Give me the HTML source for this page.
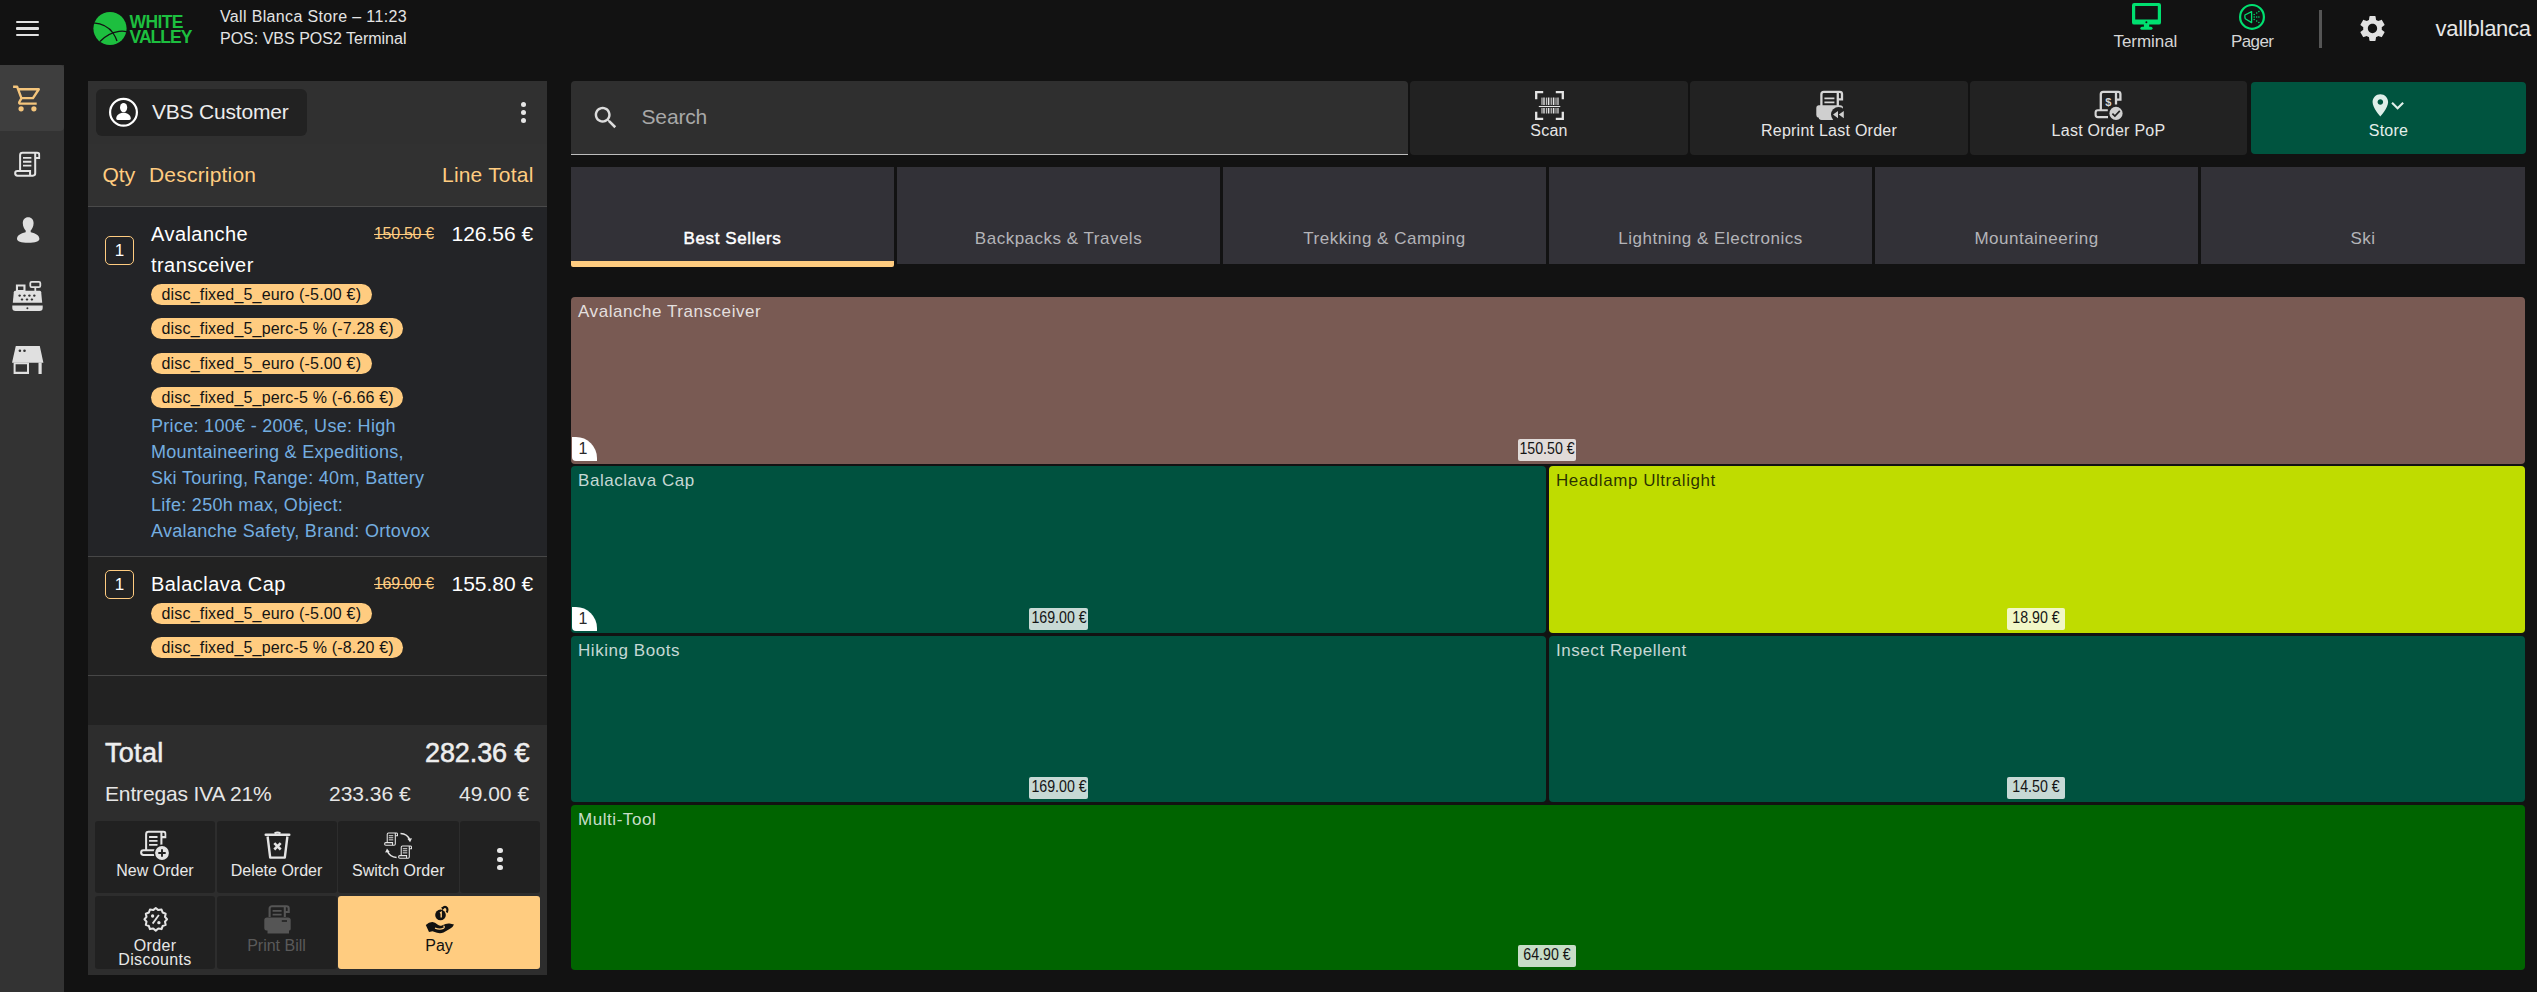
<!DOCTYPE html>
<html><head><meta charset="utf-8"><title>POS</title>
<style>
*{box-sizing:border-box;margin:0;padding:0}
html,body{width:2537px;height:992px;overflow:hidden;background:#121212;font-family:"Liberation Sans",sans-serif;color:#fff}
.a{position:absolute}
.t{position:absolute;white-space:nowrap;line-height:1}
svg{position:absolute;overflow:visible}
.hdr-txt{color:#e4e4e4;font-size:16px}
#side{left:0;top:65px;width:64px;height:927px;background:#333}
#sideact{left:0;top:65px;width:64px;height:66px;background:#3e3e3e;border-radius:0 4px 4px 0}
#op{left:88px;top:81px;width:459px;height:894px;background:#222}
#item1{left:88px;top:207px;width:459px;height:349px;background:#232427}
#ophead{left:88px;top:81px;width:459px;height:125px;background:#313131}
#opcust{left:88px;top:81px;width:459px;height:63px;background:#303030}
#opborder{left:88px;top:206px;width:459px;height:1px;background:#4a4a4a}
#cust{left:96px;top:89px;width:211px;height:47px;background:#222;border-radius:6px}
.orange{color:#ffcc80}
.qty{position:absolute;width:29px;height:29px;border:1px solid #ffcc80;border-radius:5px;color:#fff;font-size:17px;text-align:center;line-height:27px}
.pname{color:#fff;font-size:20px;letter-spacing:0.45px}
.strike{color:#ffcc80;font-size:16px;text-decoration:line-through;letter-spacing:-0.3px}
.lprice{color:#fff;font-size:21px}
.chip{position:absolute;height:21px;border-radius:11px;background:#ffcc80;color:#141414;font-size:16px;line-height:21px;padding-left:10.5px;white-space:nowrap;letter-spacing:0.18px}
.desc{color:#74aee0;font-size:18px;line-height:26.2px;white-space:nowrap;letter-spacing:0.3px}
.sep{position:absolute;left:88px;width:459px;height:1px;background:#474747}
#tot{left:88px;top:725px;width:459px;height:250px;background:#2d2d2d}
.btn{position:absolute;background:#212121;border-radius:3px}
.btxt{position:absolute;left:0;right:0;text-align:center;font-size:16px;color:#e8e8e8;white-space:nowrap;line-height:1}
#search{left:571px;top:81px;width:837px;height:74px;background:#2f2f2f;border-radius:4px 4px 0 0}
#searchline{left:571px;top:154px;width:837px;height:1px;background:#bdbdbd}
.abtn{position:absolute;top:81px;height:74px;background:#222;border-radius:4px}
.abtxt{position:absolute;top:123px;text-align:center;font-size:16px;color:#e6e6e6;line-height:1;letter-spacing:0.25px;white-space:nowrap}
.tab{position:absolute;top:167px;height:97px;background:#323137}
.tabt{position:absolute;top:230px;text-align:center;font-size:17px;color:#b4b4b8;line-height:1;white-space:nowrap;letter-spacing:0.5px}
.tile{position:absolute;border-radius:4px}
.tname{position:absolute;left:7px;top:6px;font-size:17px;line-height:1;white-space:nowrap;letter-spacing:0.55px}
.price{position:absolute;height:22px;background:rgba(255,255,255,0.78);border-radius:2px;color:#141414;font-size:16.5px;line-height:19px;text-align:center;white-space:nowrap}.price span{position:absolute;left:50%;top:0;transform:translateX(-50%) scaleX(0.86);transform-origin:50% 50%}
.badge{position:absolute;left:1px;width:25px;height:24px;background:#fff;border-radius:0 21px 0 4px;color:#2a2a2a;font-size:16px;line-height:24px;padding-left:6.5px}
</style></head><body>
<svg width="0" height="0" style="position:absolute">
  <defs>
    <symbol id="scroll" viewBox="0 0 26 26">
      <path d="M6 19.6 V4.2 A2.4 2.4 0 0 1 8.4 1.8 H22.8 A2.3 2.3 0 0 1 25.1 4.1 V7 H21" fill="none" stroke="currentColor" stroke-width="2"/>
      <path d="M21 2 V22.2 A2.3 2.3 0 0 1 18.7 24.5 H3.5 A2.4 2.4 0 0 1 1.1 22.1 A2.3 2.3 0 0 1 3.4 19.8 H15.9 V24.4" fill="none" stroke="currentColor" stroke-width="2"/>
      <path d="M8.9 6.9 H17.2 M8.9 10.7 H17.2 M8.9 14.6 H17.2" fill="none" stroke="currentColor" stroke-width="1.8"/>
    </symbol>
  </defs>
</svg>

<!-- HEADER -->
<div class="a" style="left:16px;top:20.5px;width:23px;height:2.6px;background:#e2e2e2;border-radius:1px"></div>
<div class="a" style="left:16px;top:27.2px;width:23px;height:2.6px;background:#e2e2e2;border-radius:1px"></div>
<div class="a" style="left:16px;top:33.8px;width:23px;height:2.6px;background:#e2e2e2;border-radius:1px"></div>

<svg style="left:93px;top:11px" width="34" height="35" viewBox="0 0 34 35">
  <circle cx="17" cy="17.5" r="16.6" fill="#1dbf3f"/>
  <path d="M0.5 11.8 C9 12.5 16 16 20 22 C22 25 23 27 24 30" stroke="#121212" stroke-width="1.3" fill="none"/>
  <path d="M7 30.5 C12 25 18 21.5 26 20.3 C29 20 31.5 20 34 20.8" stroke="#121212" stroke-width="1.3" fill="none"/>
</svg>
<div class="t" style="left:129.5px;top:15px;font-size:17.5px;font-weight:700;color:#1dbf3f;letter-spacing:-0.6px;line-height:14.7px">WHITE<br><span style="letter-spacing:-0.95px">VALLEY</span></div>

<div class="t hdr-txt" style="left:220px;top:8.5px;letter-spacing:0.35px">Vall Blanca Store – 11:23</div>
<div class="t hdr-txt" style="left:220px;top:30.5px">POS: VBS POS2 Terminal</div>

<!-- top right -->
<svg style="left:2132px;top:3.2px" width="29" height="27" viewBox="0 0 29 27">
  <path fill="#00e070" fill-rule="evenodd" d="M2.2 0 H26.8 A2.2 2.2 0 0 1 29 2.2 V19.4 A2.2 2.2 0 0 1 26.8 21.6 H2.2 A2.2 2.2 0 0 1 0 19.4 V2.2 A2.2 2.2 0 0 1 2.2 0 Z M3.2 3 V16.6 H25.8 V3 Z"/>
  <circle cx="14.4" cy="19.2" r="1" fill="#121212"/>
  <rect x="11.9" y="21" width="5.3" height="3.5" fill="#00e070"/>
  <rect x="8.4" y="23.7" width="12.1" height="3" rx="1.5" fill="#00e070"/>
</svg>
<div class="t" style="left:2113.5px;top:32.8px;font-size:17px;color:#d6d6d6;letter-spacing:-0.05px">Terminal</div>
<svg style="left:2239.4px;top:3.5px" width="26" height="26" viewBox="0 0 26 26">
  <circle cx="13" cy="12.9" r="11.9" fill="none" stroke="#00e070" stroke-width="2.2"/>
  <path d="M5.9 11 Q5.6 12.9 6.3 14.8 L12.6 18.6 V7.6 Z" fill="none" stroke="#00e070" stroke-width="1.3" stroke-linejoin="round"/>
  <g fill="#00e070"><circle cx="15.2" cy="10.5" r="0.75"/><circle cx="15.2" cy="13" r="0.75"/><circle cx="15.2" cy="15.5" r="0.75"/>
  <circle cx="17.7" cy="9" r="0.75"/><circle cx="17.7" cy="13" r="0.75"/><circle cx="17.7" cy="17" r="0.75"/>
  <circle cx="19.9" cy="7.6" r="0.75"/><circle cx="19.9" cy="13" r="0.75"/><circle cx="19.9" cy="18.4" r="0.75"/></g>
</svg>
<div class="t" style="left:2231px;top:32.8px;font-size:17px;color:#d6d6d6;letter-spacing:-0.6px">Pager</div>
<div class="a" style="left:2319px;top:10px;width:3px;height:38px;background:#555"></div>
<svg style="left:2356.6px;top:13.3px" width="31" height="31" viewBox="0 0 24 24">
  <path fill="#e0e0e0" d="M19.14 12.94c.04-.3.06-.61.06-.94 0-.32-.02-.64-.07-.94l2.03-1.58c.18-.14.23-.41.12-.61l-1.92-3.32c-.12-.22-.37-.29-.59-.22l-2.39.96c-.5-.38-1.03-.7-1.62-.94l-.36-2.54c-.04-.24-.24-.41-.48-.41h-3.84c-.24 0-.43.17-.47.41l-.36 2.54c-.59.24-1.13.57-1.62.94l-2.39-.96c-.22-.08-.47 0-.59.22L2.74 8.87c-.12.21-.08.47.12.61l2.03 1.58c-.05.3-.09.63-.09.94s.02.64.07.94l-2.03 1.58c-.18.14-.23.41-.12.61l1.92 3.32c.12.22.37.29.59.22l2.39-.96c.5.38 1.03.7 1.62.94l.36 2.54c.05.24.24.41.48.41h3.84c.24 0 .44-.17.47-.41l.36-2.54c.59-.24 1.13-.56 1.62-.94l2.39.96c.22.08.47 0 .59-.22l1.92-3.32c.12-.22.07-.47-.12-.61l-2.01-1.58zM12 15.6c-1.98 0-3.6-1.62-3.6-3.6s1.62-3.6 3.6-3.6 3.6 1.62 3.6 3.6-1.62 3.6-3.6 3.6z"/>
</svg>
<div class="t" style="left:2435.5px;top:18px;font-size:22px;color:#e6e6e6;letter-spacing:-0.25px">vallblanca</div>

<!-- SIDEBAR -->
<div class="a" id="side"></div>
<div class="a" id="sideact"></div>
<svg style="left:13px;top:85px" width="27" height="27" viewBox="13 85 27 27">
  <path d="M13.1 86.7 H17.1 L21.4 98.1 H33 L38.8 89.25 H18.9 M21.4 98.4 L19.3 102 Q18.8 103.6 20.5 103.6 H36.7" fill="none" stroke="#f4c57c" stroke-width="2.4" stroke-linejoin="round"/>
  <circle cx="21.1" cy="108.8" r="2.6" fill="#f4c57c"/><circle cx="33.9" cy="108.8" r="2.6" fill="#f4c57c"/>
</svg>
<svg style="left:14.4px;top:150.5px;color:#e4e4e4" width="26.3" height="26.2"><use href="#scroll"/></svg>
<svg style="left:17px;top:216.5px" width="22.4" height="26" viewBox="0 0 22.4 26">
  <path fill="#e0e0e0" d="M11.2 0.2 C14.6 0.2 16.6 2.6 16.6 6.2 C16.6 9.6 14.8 12.6 13.6 13.7 L13.8 15.2 C18.8 16.2 22.4 18.4 22.4 21.8 C22.4 24.6 18.4 25.8 11.2 25.8 C4 25.8 0 24.6 0 21.8 C0 18.4 3.6 16.2 8.6 15.2 L8.8 13.7 C7.6 12.6 5.8 9.6 5.8 6.2 C5.8 2.6 7.8 0.2 11.2 0.2 Z"/>
</svg>
<svg style="left:12px;top:281px" width="31" height="30" viewBox="0 0 31 30">
  <g fill="#e0e0e0">
  <rect x="18.3" y="0.9" width="10" height="5.2" rx="1.4" fill="none" stroke="#e0e0e0" stroke-width="1.8"/>
  <rect x="22.4" y="6" width="1.8" height="4" />
  <path fill-rule="evenodd" d="M3.9 3.6 H13.5 V10.5 H3.9 Z M6 5.4 V9 H11.4 V5.4 Z"/>
  <path d="M3.4 9.8 H27.6 Q29 9.8 29.2 11.2 L30.2 21.8 H0.8 L1.8 11.2 Q2 9.8 3.4 9.8 Z"/>
  <path d="M0.3 24.6 H30.7 V26.8 Q30.7 30 27.5 30 H3.5 Q0.3 30 0.3 26.8 Z"/>
  </g>
  <g fill="#333"><circle cx="7.6" cy="14.6" r="1.2"/><circle cx="12.5" cy="14.6" r="1.2"/><circle cx="17.4" cy="14.6" r="1.2"/><circle cx="22.3" cy="14.6" r="1.2"/>
  <path d="M10 17.3 V19.7 M8.8 18.5 H11.2 M15 17.3 V19.7 M13.8 18.5 H16.2 M19.9 17.3 V19.7 M18.7 18.5 H21.1" stroke="#333" stroke-width="1.1"/>
  <circle cx="15.4" cy="27.3" r="1"/></g>
</svg>
<svg style="left:11.7px;top:346px" width="31.4" height="28" viewBox="0 0 31.4 28">
  <g fill="#e0e0e0">
  <path d="M3.8 0 H27.8 L31.4 16.8 H0 Z"/>
  <path fill-rule="evenodd" d="M1.6 16.5 H17 V28 H1.6 Z M3.6 18.3 V25.8 H15 V18.3 Z"/>
  <rect x="26.5" y="16.5" width="3.2" height="11.5"/>
  </g>
  <circle cx="7.9" cy="4.8" r="1.3" fill="#333"/><circle cx="12.5" cy="4.8" r="1.3" fill="#333"/>
</svg>
<!-- ORDER PANEL -->
<div class="a" id="op"></div>
<div class="a" id="ophead"></div>
<div class="a" id="opcust"></div>
<div class="a" id="opborder"></div>
<div class="a" id="item1"></div>
<div class="a" id="cust"></div>
<svg style="left:108.9px;top:98.3px" width="29" height="29" viewBox="0 0 29 29">
  <circle cx="14.5" cy="14.3" r="13.4" fill="none" stroke="#fff" stroke-width="2.2"/>
  <ellipse cx="14.6" cy="9.6" rx="3.6" ry="4.7" fill="#fff"/>
  <path d="M7.2 20.6 C7.2 17.2 10.4 14.7 14.5 14.7 C18.6 14.7 21.8 17.2 21.8 20.6 C21.8 21.9 20.6 22.1 19.4 22.1 H9.6 C8.4 22.1 7.2 21.9 7.2 20.6 Z" fill="#fff"/>
</svg>
<div class="t" style="left:152px;top:100.5px;font-size:21px;color:#ececec;letter-spacing:-0.2px">VBS Customer</div>
<div class="a" style="left:520.8px;top:101.8px;width:5.2px;height:5.2px;border-radius:50%;background:#e6e6e6"></div>
<div class="a" style="left:520.8px;top:109.8px;width:5.2px;height:5.2px;border-radius:50%;background:#e6e6e6"></div>
<div class="a" style="left:520.8px;top:117.8px;width:5.2px;height:5.2px;border-radius:50%;background:#e6e6e6"></div>
<div class="t orange" style="left:102.5px;top:164px;font-size:21px">Qty</div>
<div class="t orange" style="left:149px;top:164px;font-size:21px;letter-spacing:0.2px">Description</div>
<div class="t orange" style="left:442px;top:164px;font-size:21px;letter-spacing:0.2px">Line Total</div>

<!-- line 1 -->
<div class="qty" style="left:105px;top:236px">1</div>
<div class="t pname" style="left:151px;top:223.5px">Avalanche</div>
<div class="t pname" style="left:151px;top:254.5px">transceiver</div>
<div class="t strike" style="left:374px;top:226px">150.50 €</div>
<div class="t lprice" style="left:451.5px;top:223.3px">126.56 €</div>
<div class="chip" style="left:151px;top:284px;width:221px">disc_fixed_5_euro (-5.00 €)</div>
<div class="chip" style="left:151px;top:318.3px;width:252px">disc_fixed_5_perc-5 % (-7.28 €)</div>
<div class="chip" style="left:151px;top:352.5px;width:221px">disc_fixed_5_euro (-5.00 €)</div>
<div class="chip" style="left:151px;top:387px;width:252px">disc_fixed_5_perc-5 % (-6.66 €)</div>
<div class="a desc" style="left:151px;top:413px">Price: 100€ - 200€, Use: High<br>Mountaineering &amp; Expeditions,<br>Ski Touring, Range: 40m, Battery<br>Life: 250h max, Object:<br>Avalanche Safety, Brand: Ortovox</div>
<div class="sep" style="top:556px"></div>

<!-- line 2 -->
<div class="qty" style="left:105px;top:570px">1</div>
<div class="t pname" style="left:151px;top:574px">Balaclava Cap</div>
<div class="t strike" style="left:374px;top:576px">169.00 €</div>
<div class="t lprice" style="left:451.5px;top:573.3px">155.80 €</div>
<div class="chip" style="left:151px;top:603px;width:221px">disc_fixed_5_euro (-5.00 €)</div>
<div class="chip" style="left:151px;top:637px;width:252px">disc_fixed_5_perc-5 % (-8.20 €)</div>
<div class="sep" style="top:675px"></div>

<!-- totals -->
<div class="a" id="tot"></div>
<div class="t" style="left:105px;top:739.5px;font-size:27px;color:#eee;-webkit-text-stroke:0.55px #eee;letter-spacing:0.3px">Total</div>
<div class="t" style="left:425px;top:739.5px;font-size:27px;color:#eee;-webkit-text-stroke:0.55px #eee;letter-spacing:-0.1px">282.36 €</div>
<div class="t" style="left:105px;top:782.5px;font-size:21px;color:#e6e6e6;letter-spacing:-0.15px">Entregas IVA 21%</div>
<div class="t" style="left:329px;top:782.5px;font-size:21px;color:#e6e6e6">233.36 €</div>
<div class="t" style="left:459px;top:782.5px;font-size:21px;color:#e6e6e6">49.00 €</div>

<div class="btn" style="left:95px;top:821px;width:120px;height:72px"><div class="btxt" style="top:42px">New Order</div></div>
<div class="btn" style="left:216.5px;top:821px;width:120px;height:72px"><div class="btxt" style="top:42px">Delete Order</div></div>
<div class="btn" style="left:338px;top:821px;width:120.5px;height:72px"><div class="btxt" style="top:42px">Switch Order</div></div>
<div class="btn" style="left:460px;top:821px;width:80px;height:72px"></div>
<div class="a" style="left:497.4px;top:848.3px;width:5.2px;height:5.2px;border-radius:50%;background:#e6e6e6"></div>
<div class="a" style="left:497.4px;top:856.8px;width:5.2px;height:5.2px;border-radius:50%;background:#e6e6e6"></div>
<div class="a" style="left:497.4px;top:865.3px;width:5.2px;height:5.2px;border-radius:50%;background:#e6e6e6"></div>
<div class="btn" style="left:95px;top:895.5px;width:120px;height:73px"><div class="btxt" style="top:43px;line-height:14px;letter-spacing:0.35px">Order<br>Discounts</div></div>
<div class="btn" style="left:216.5px;top:895.5px;width:120px;height:73px"><div class="btxt" style="top:42px;color:#5a5a5a">Print Bill</div></div>
<div class="btn" style="left:338px;top:895.5px;width:202px;height:73px;background:#ffcc80"><div class="btxt" style="top:42px;color:#111">Pay</div></div>

<!-- action icons -->
<svg style="left:140.3px;top:830.1px;color:#e4e4e4" width="26.5" height="26.5"><use href="#scroll"/></svg>
<svg style="left:155.1px;top:846.1px" width="14" height="14" viewBox="0 0 14 14">
  <circle cx="7" cy="7" r="8.4" fill="#212121"/>
  <circle cx="7" cy="7" r="6.9" fill="#e4e4e4"/>
  <path d="M7 3.3 V10.7 M3.3 7 H10.7" stroke="#212121" stroke-width="1.9"/>
</svg>
<svg style="left:264.9px;top:831.9px" width="25" height="27" viewBox="0 0 25 27">
  <path d="M0.8 2.8 H24.2" stroke="#e4e4e4" stroke-width="2.6" stroke-linecap="round"/>
  <path d="M9.5 1.5 Q12.5 -0.6 15.5 1.5" stroke="#e4e4e4" stroke-width="2" fill="none"/>
  <path d="M2.6 4.5 L5.2 25.6 H19.8 L22.4 4.5" stroke="#e4e4e4" stroke-width="2.4" fill="none" stroke-linejoin="round"/>
  <path d="M9.3 11.1 L15.7 17.5 M15.7 11.1 L9.3 17.5" stroke="#e4e4e4" stroke-width="2.6"/>
</svg>
<svg style="left:383.7px;top:832.4px;color:#e4e4e4" width="14" height="14"><use href="#scroll"/></svg>
<svg style="left:398px;top:845px;color:#e4e4e4" width="14" height="14"><use href="#scroll"/></svg>
<svg style="left:383.7px;top:832.4px" width="29" height="27" viewBox="0 0 29 27">
  <path d="M16.5 1.4 Q23.5 1.6 25.8 8" stroke="#e4e4e4" stroke-width="1.5" fill="none"/>
  <path d="M23.4 6.8 L26.1 10.3 L28 6.3 Z" fill="#e4e4e4"/>
  <path d="M12.6 25.4 Q5.6 25.2 3.3 18.8" stroke="#e4e4e4" stroke-width="1.5" fill="none"/>
  <path d="M5.7 20 L3 16.5 L1.1 20.5 Z" fill="#e4e4e4"/>
</svg>
<svg style="left:142.7px;top:906px" width="25.5" height="26.6" viewBox="0 0 26 26">
  <path d="M13 1.5 L15.6 3.6 L18.9 3 L20 6.1 L23.1 7.3 L22.4 10.6 L24.5 13 L22.4 15.4 L23.1 18.7 L20 19.9 L18.9 23 L15.6 22.4 L13 24.5 L10.4 22.4 L7.1 23 L6 19.9 L2.9 18.7 L3.6 15.4 L1.5 13 L3.6 10.6 L2.9 7.3 L6 6.1 L7.1 3 L10.4 3.6 Z" fill="none" stroke="#e4e4e4" stroke-width="2.1" stroke-linejoin="round"/>
  <path d="M16.2 8.6 L9.8 17.4" stroke="#e4e4e4" stroke-width="1.8"/>
  <circle cx="9.8" cy="9.6" r="1.7" fill="#e4e4e4"/><circle cx="16.2" cy="16.4" r="1.7" fill="#e4e4e4"/>
</svg>
<svg style="left:264px;top:905.4px" width="27" height="28.5" viewBox="0 0 27 28.5">
  <path d="M5.6 12 V3.6 A2.4 2.4 0 0 1 8 1.2 H22.6 A2.1 2.1 0 0 1 24.7 3.3 V7 H20.8 M20.8 1.4 V12" fill="none" stroke="#555" stroke-width="2.1"/>
  <path d="M8.6 5.8 H17.6 M8.6 9.6 H17.6" stroke="#555" stroke-width="1.8"/>
  <path d="M3 12.4 H24 Q26.7 12.4 26.7 15 V24 Q26.7 25.6 25 25.6 V28.5 H3.5 V25.6 Q0.3 25.6 0.3 23 V15 Q0.3 12.4 3 12.4 Z" fill="#555"/>
  <path d="M17.8 16 H23" stroke="#212121" stroke-width="1.6"/>
</svg>
<svg style="left:425.6px;top:905.4px" width="28.5" height="28.5" viewBox="0 0 28.5 28.5">
  <circle cx="14.5" cy="9.9" r="5.3" fill="#111"/>
  <path d="M14 8.2 L15.2 7.4 V12.6" stroke="#ffcc80" stroke-width="1.4" fill="none"/>
  <path d="M16.4 3.4 Q19.2 0.2 21.2 3.4 Q22 5.2 20.8 7.6" stroke="#111" stroke-width="2.2" fill="none"/>
  <path d="M15.2 2.2 L18.3 2.4 L16.6 5.2 Z" fill="#111"/>
  <path d="M-0.2 19.9 Q3 17 6.4 17.1 Q9 17.3 11.5 19.6 Q13.5 21.5 16.5 20.2 Q20 18.3 23.5 18.6 L28 19.4 Q27 22 24 23.7 L17.5 27.4 Q14.5 28.8 11 27.7 L6.5 26.2 L3 26.9 Z" fill="#111"/>
  <path d="M9 23.1 Q14 25 17.2 23.4 Q19.4 21.8 17.4 20.9" stroke="#ffcc80" stroke-width="1.2" fill="none"/>
</svg>
<!-- SEARCH + ACTIONS -->
<div class="a" id="search"></div>
<div class="a" id="searchline"></div>
<svg style="left:591.2px;top:103.2px" width="29.5" height="29.5" viewBox="0 0 24 24">
  <path fill="#dcdcdc" d="M15.5 14h-.79l-.28-.27C15.41 12.59 16 11.11 16 9.5 16 5.91 13.09 3 9.5 3S3 5.91 3 9.5 5.91 16 9.5 16c1.61 0 3.09-.59 4.23-1.57l.27.28v.79l5 4.99L20.49 19l-4.99-5zm-6 0C7.01 14 5 11.99 5 9.5S7.01 5 9.5 5 14 7.01 14 9.5 11.99 14 9.5 14z"/>
</svg>
<div class="t" style="left:641.5px;top:105.5px;font-size:21px;color:#a8a8a8;letter-spacing:-0.15px">Search</div>
<div class="abtn" style="left:1410px;width:278px"></div>
<div class="abtn" style="left:1690px;width:278px"></div>
<div class="abtn" style="left:1970px;width:277px"></div>
<div class="abtn" style="left:2251px;top:82px;height:72px;width:275px;background:#00543f"></div>
<div class="abtxt" style="left:1410px;width:278px">Scan</div>
<div class="abtxt" style="left:1690px;width:278px">Reprint Last Order</div>
<div class="abtxt" style="left:1970px;width:277px">Last Order PoP</div>
<div class="abtxt" style="left:2251px;width:275px;color:#e4efeb">Store</div>

<svg style="left:1535px;top:91px" width="29" height="29" viewBox="0 0 29 29">
  <path d="M1.2 8.2 V1.2 H8.2 M20.8 1.2 H27.8 V8.2 M1.2 20.8 V27.8 H8.2 M20.8 27.8 H27.8 V20.8" fill="none" stroke="#e4e4e4" stroke-width="2.3"/>
  <g stroke="#e4e4e4">
  <path d="M7 6.6 V13.9 M7 17 V22.5" stroke-width="1"/>
  <path d="M9 6.6 V13.9 M9 17 V22.5" stroke-width="1.4"/>
  <path d="M11.4 6.6 V13.9 M11.4 17 V22.5" stroke-width="0.9"/>
  <path d="M13.6 6.6 V13.9 M13.6 17 V22.5" stroke-width="1.6"/>
  <path d="M16.2 6.6 V13.9 M16.2 17 V22.5" stroke-width="1"/>
  <path d="M18.6 6.6 V13.9 M18.6 17 V22.5" stroke-width="1.6"/>
  <path d="M21 6.6 V13.9 M21 17 V22.5" stroke-width="0.9"/>
  <path d="M23 6.6 V13.9 M23 17 V22.5" stroke-width="1.2"/>
  <path d="M3.8 15.5 H25.3" stroke-width="1.1"/>
  </g>
</svg>

<svg style="left:1815px;top:91px" width="30" height="29" viewBox="1815 91 30 29">
  <path d="M1821.4 106 V94.2 A2.4 2.4 0 0 1 1823.8 91.8 H1839.8 A2.2 2.2 0 0 1 1842 94 V99.4 H1837.8 M1837.8 92 V106" fill="none" stroke="#d6d6d6" stroke-width="2.3"/>
  <path d="M1824.4 98.3 H1834.4 M1824.4 102.3 H1834.4" stroke="#d6d6d6" stroke-width="1.8"/>
  <path d="M1818.6 105.3 H1840 Q1843 105.3 1843 108 V117 Q1843 119.9 1840 119.9 H1821.5 Q1818.8 119.9 1818.8 117.8 Q1816.3 117.6 1816.3 115 V107.8 Q1816.3 105.3 1818.6 105.3 Z" fill="#cfcfcf"/>
  <circle cx="1838.6" cy="114.6" r="7.6" fill="#222"/>
  <path d="M1833 114.6 L1838 111 V118.2 Z M1838.8 114.6 L1843.8 111 V118.2 Z" fill="#cfcfcf"/>
</svg>

<svg style="left:2095px;top:91px" width="28" height="29" viewBox="2095 91 28 29">
  <path d="M2100.8 110 V94.2 A2.4 2.4 0 0 1 2103.2 91.8 H2118.2 A2.2 2.2 0 0 1 2120.4 94 V99.6 H2116 M2116 92 V104.6" fill="none" stroke="#d6d6d6" stroke-width="2.3"/>
  <path d="M2108 117.1 H2098 A2.4 2.4 0 0 1 2095.6 114.7 V112.6 A2.3 2.3 0 0 1 2097.9 110.3 H2107.8" fill="none" stroke="#d6d6d6" stroke-width="2.1"/>
  <text x="2108.4" y="105.6" font-family="Liberation Sans" font-size="11" font-weight="700" fill="#d6d6d6" text-anchor="middle">$</text>
  <circle cx="2116" cy="113.4" r="6.6" fill="#d0d0d0"/>
  <path d="M2112.4 113.6 L2114.9 116.1 L2119.8 110.9" stroke="#222" stroke-width="1.7" fill="none"/>
</svg>

<svg style="left:2367px;top:91.7px" width="26.7" height="26.7" viewBox="0 0 24 24">
  <path fill="#dfeee9" d="M12 2C8.13 2 5 5.13 5 9c0 5.25 7 13 7 13s7-7.75 7-13c0-3.87-3.13-7-7-7zm0 9.5c-1.38 0-2.5-1.12-2.5-2.5s1.12-2.5 2.5-2.5 2.5 1.12 2.5 2.5-1.12 2.5-2.5 2.5z"/>
</svg>
<svg style="left:2384.7px;top:92.5px" width="25.2" height="25.2" viewBox="0 0 24 24">
  <path fill="#dfeee9" d="M7.41 8.59 12 13.17l4.59-4.58L18 10l-6 6-6-6 1.41-1.41z"/>
</svg>

<!-- TABS -->
<div class="tab" style="left:571px;width:323px"></div>
<div class="a" style="left:571px;top:261px;width:323px;height:6px;background:#ffcc80;border-radius:0 0 2px 2px"></div>
<div class="tab" style="left:897px;width:323px"></div>
<div class="tab" style="left:1223px;width:323px"></div>
<div class="tab" style="left:1549px;width:323px"></div>
<div class="tab" style="left:1875px;width:323px"></div>
<div class="tab" style="left:2201px;width:324px"></div>
<div class="tabt" style="left:571px;width:323px;color:#fff;-webkit-text-stroke:0.45px #fff;letter-spacing:0.6px">Best Sellers</div>
<div class="tabt" style="left:897px;width:323px">Backpacks &amp; Travels</div>
<div class="tabt" style="left:1223px;width:323px">Trekking &amp; Camping</div>
<div class="tabt" style="left:1549px;width:323px">Lightning &amp; Electronics</div>
<div class="tabt" style="left:1875px;width:323px">Mountaineering</div>
<div class="tabt" style="left:2201px;width:324px">Ski</div>

<!-- TILES -->
<div class="tile" style="left:571px;top:297px;width:1954px;height:167px;background:#795a53">
  <div class="tname" style="color:rgba(255,255,255,0.82)">Avalanche Transceiver</div>
  <div class="badge" style="top:140px">1</div>
  <div class="price" style="left:947px;top:142px;width:58px"><span>150.50 €</span></div>
</div>
<div class="tile" style="left:571px;top:466px;width:975px;height:167px;background:#00523f">
  <div class="tname" style="color:rgba(255,255,255,0.78)">Balaclava Cap</div>
  <div class="badge" style="top:141px">1</div>
  <div class="price" style="left:458px;top:142px;width:59px"><span>169.00 €</span></div>
</div>
<div class="tile" style="left:1549px;top:466px;width:976px;height:167px;background:#bfdc00">
  <div class="tname" style="color:rgba(0,0,0,0.78)">Headlamp Ultralight</div>
  <div class="price" style="left:458px;top:142px;width:58px"><span>18.90 €</span></div>
</div>
<div class="tile" style="left:571px;top:635.5px;width:975px;height:166px;background:#00523f">
  <div class="tname" style="color:rgba(255,255,255,0.78)">Hiking Boots</div>
  <div class="price" style="left:458px;top:141px;width:59px"><span>169.00 €</span></div>
</div>
<div class="tile" style="left:1549px;top:635.5px;width:976px;height:166px;background:#00523f">
  <div class="tname" style="color:rgba(255,255,255,0.78)">Insect Repellent</div>
  <div class="price" style="left:458px;top:141px;width:58px"><span>14.50 €</span></div>
</div>
<div class="tile" style="left:571px;top:805px;width:1954px;height:165px;background:#006400">
  <div class="tname" style="color:rgba(255,255,255,0.8)">Multi-Tool</div>
  <div class="price" style="left:947px;top:140px;width:58px"><span>64.90 €</span></div>
</div>

</body></html>
